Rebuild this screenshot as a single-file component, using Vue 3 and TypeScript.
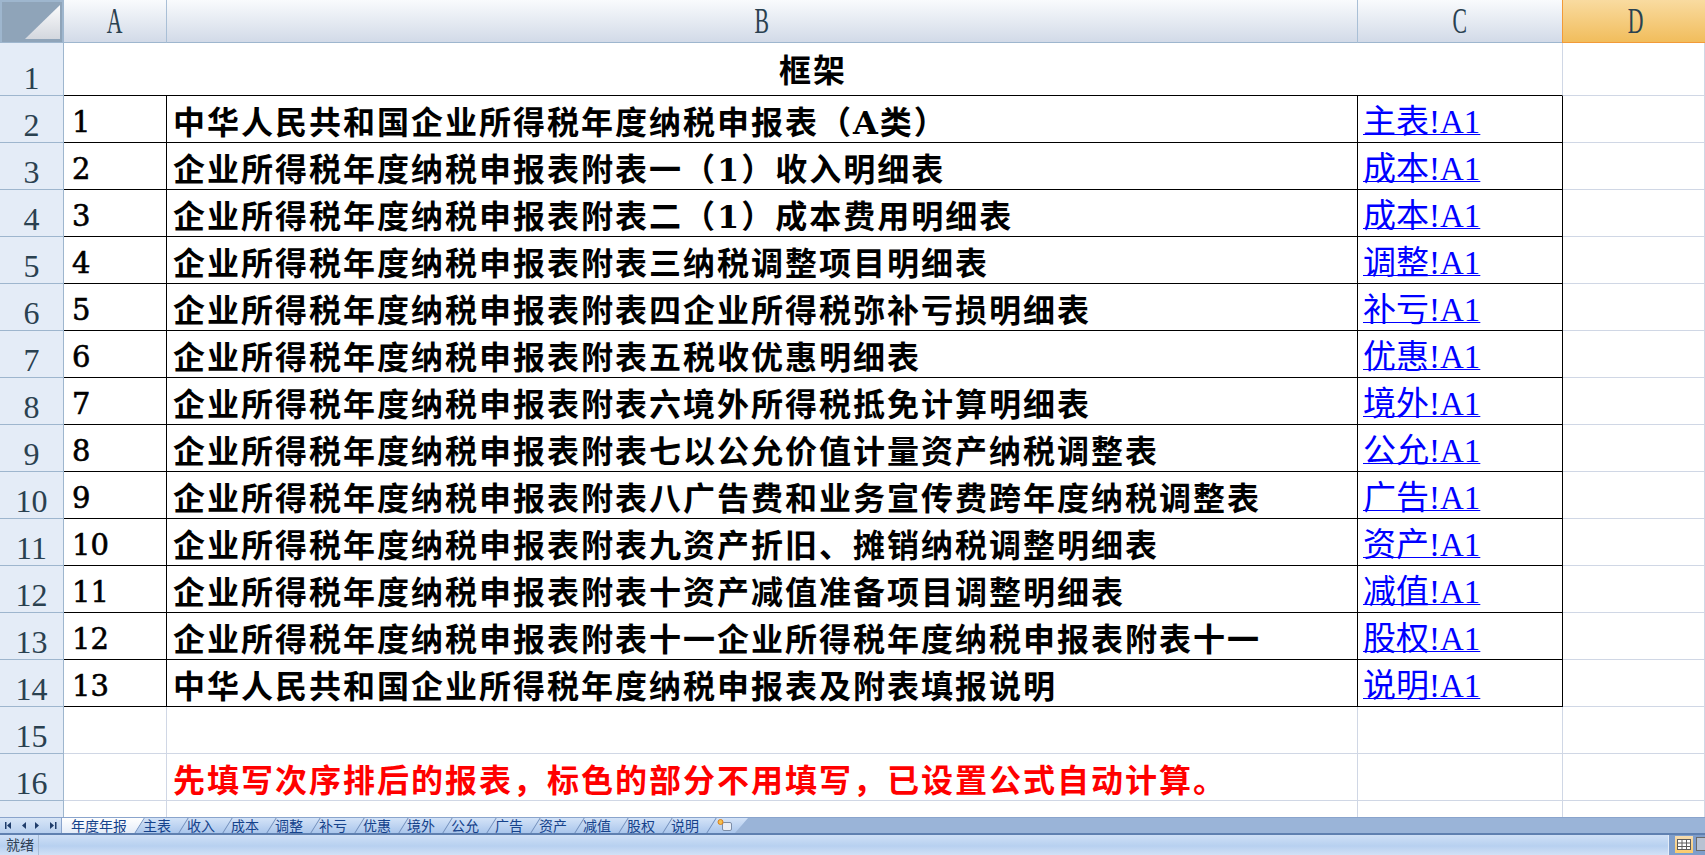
<script setup lang="ts">
interface Row { no: number; title: string; link: string }
const P = '企业所得税年度纳税申报表附表'
const rows: Row[] = [
  { no: 1, title: '中华人民共和国企业所得税年度纳税申报表（A类）', link: '主表!A1' },
  { no: 2, title: P + '一（1）收入明细表', link: '成本!A1' },
  { no: 3, title: P + '二（1）成本费用明细表', link: '成本!A1' },
  { no: 4, title: P + '三纳税调整项目明细表', link: '调整!A1' },
  { no: 5, title: P + '四企业所得税弥补亏损明细表', link: '补亏!A1' },
  { no: 6, title: P + '五税收优惠明细表', link: '优惠!A1' },
  { no: 7, title: P + '六境外所得税抵免计算明细表', link: '境外!A1' },
  { no: 8, title: P + '七以公允价值计量资产纳税调整表', link: '公允!A1' },
  { no: 9, title: P + '八广告费和业务宣传费跨年度纳税调整表', link: '广告!A1' },
  { no: 10, title: P + '九资产折旧、摊销纳税调整明细表', link: '资产!A1' },
  { no: 11, title: P + '十资产减值准备项目调整明细表', link: '减值!A1' },
  { no: 12, title: P + '十一' + P + '十一', link: '股权!A1' },
  { no: 13, title: '中华人民共和国企业所得税年度纳税申报表及附表填报说明', link: '说明!A1' },
]
const tabs: string[] = ['主表', '收入', '成本', '调整', '补亏', '优惠', '境外', '公允', '广告', '资产', '减值', '股权', '说明']
</script>

<template>
  <div class="app">
    <div class="sheet">
      <div class="corner"><i class="tri"></i></div>
      <div class="col"><span>A</span></div>
      <div class="col"><span>B</span></div>
      <div class="col"><span>C</span></div>
      <div class="col active"><span>D</span></div>

      <div class="rn">1</div>
      <div class="title">框架</div>
      <div class="cell"></div>

      <template v-for="r in rows" :key="r.no">
        <div class="rn">{{ r.no + 1 }}</div>
        <div class="cell boxed num">{{ r.no }}</div>
        <div class="cell boxed name">{{ r.title }}</div>
        <div class="cell boxed"><span class="link">{{ r.link }}</span></div>
        <div class="cell"></div>
      </template>

      <div class="rn">15</div>
      <div class="cell"></div><div class="cell"></div><div class="cell"></div><div class="cell"></div>

      <div class="rn">16</div>
      <div class="cell"></div>
      <div class="cell name red">先填写次序排后的报表，标色的部分不用填写，已设置公式自动计算。</div>
      <div class="cell"></div><div class="cell"></div>

      <div class="rn"></div>
      <div class="cell"></div><div class="cell"></div><div class="cell"></div><div class="cell"></div>
    </div>

    <div class="tabbar">
      <div class="nav">
        <svg width="62" height="16" viewBox="0 0 62 16" fill="#1f3d6b">
          <path d="M5 5h1.500v7H5zM11 5v7L7 8.500z" />
          <path d="M26 5v7l-4-3.500z" />
          <path d="M35 5v7l4-3.500z" />
          <path d="M50 5v7l4-3.500zM55 5h1.500v7H55z" />
        </svg>
      </div>
      <div class="tab first">年度年报</div>
      <div v-for="t in tabs" :key="t" class="tab">{{ t }}</div>
      <div class="tab newtab">
        <svg width="22" height="15" viewBox="0 0 22 15">
          <rect x="6.500" y="4.500" width="9" height="8" rx="1.500" fill="#e9eef6" stroke="#7d8ea8" />
          <circle cx="4.500" cy="4" r="2.500" fill="#f6c04e" stroke="#d97f1c" />
        </svg>
      </div>
      <div class="rest"></div>
    </div>

    <div class="status">
      <div class="ready">就绪</div>
      <div class="fill"></div>
      <div class="views">
        <div class="vbtn on">
          <svg width="14" height="11" viewBox="0 0 14 11">
            <rect x="0.500" y="0.500" width="13" height="10" fill="#fff" stroke="#5c5c5c" />
            <path d="M0 4h14M0 7.500h14M5 0v11M9.500 0v11" stroke="#5c5c5c" fill="none" />
          </svg>
        </div>
        <div class="vbtn off"></div>
      </div>
    </div>
  </div>
</template>

<style scoped>
.app {
  width: 1705px;
  height: 855px;
  display: flex;
  flex-direction: column;
  overflow: hidden;
  background: #fff;
  font-family: "Liberation Serif", "Noto Sans CJK SC", serif;
}
.sheet {
  height: 817px;
  flex: none;
  overflow: hidden;
  display: grid;
  grid-template-columns: 64px 103px 1191px 205px 142px;
  grid-template-rows: 43px 53px repeat(16, 47px);
}
.corner {
  background: #8fa4b9;
  border: 1px solid #9eb6ce;
  border-width: 2px 2px 1px 2px;
  position: relative;
  box-sizing: border-box;
}
.tri {
  position: absolute;
  left: 23px;
  top: 3px;
  width: 35px;
  height: 34px;
  background: linear-gradient(#fbfbfc, #d3d7de);
  clip-path: polygon(100% 0, 100% 100%, 0 100%);
}
.col {
  box-sizing: border-box;
  background: linear-gradient(#f9fbfd, #d2dae8);
  border-right: 1px solid #a9bfd6;
  border-bottom: 1px solid #9eb6ce;
  display: flex;
  align-items: center;
  justify-content: center;
  font-size: 35px;
  color: #2a4150;
}
.col span { display: block; transform: scaleX(0.62); line-height: 42px; margin-top: 2px; }
.col.active {
  background: linear-gradient(#f9dba0, #f1bd5c);
  border-bottom-color: #f29a38;
  border-left: 1px solid #f29a38;
  border-right: 0;
  margin-left: -1px;
  padding-left: 4px;
}
.rn {
  box-sizing: border-box;
  background: #e4ecf7;
  border-right: 1px solid #9eb6ce;
  border-bottom: 1px solid #9eb6ce;
  font-size: 32px;
  line-height: 32px;
  color: #2a4150;
  display: flex;
  align-items: flex-end;
  justify-content: center;
  padding-bottom: 1px;
  white-space: nowrap;
}
.cell {
  box-sizing: border-box;
  border-right: 1px solid #d0d7e5;
  border-bottom: 1px solid #d0d7e5;
  display: flex;
  align-items: flex-end;
  white-space: nowrap;
  min-width: 0;
}
.title {
  grid-column: span 3;
  box-sizing: border-box;
  border-right: 1px solid #d0d7e5;
  border-bottom: 1px solid #000;
  display: flex;
  align-items: center;
  justify-content: center;
  font-weight: 700;
  font-size: 32px;
  letter-spacing: 2px;
  color: #000;
  padding-bottom: 3px;
}
.boxed {
  border-right: 1px solid #000;
  border-bottom: 1px solid #000;
  color: #000;
}
.num {
  font-family: "DejaVu Serif", "Liberation Serif", serif;
  font-weight: 400;
  -webkit-text-stroke: 0.6px #000;
  font-size: 29px;
  line-height: 39px;
  padding-left: 8px;
}
.name {
  font-family: "DejaVu Serif", "Noto Sans CJK SC", serif;
  font-weight: 700;
  font-size: 32px;
  letter-spacing: 2px;
  line-height: 38px;
  padding-left: 6px;
}
.red { color: #f00; }
.link {
  font-size: 33px;
  line-height: 40px;
  color: #0000ff;
  text-decoration: underline;
  text-decoration-thickness: 1px;
  text-decoration-skip-ink: none;
  text-underline-offset: 1px;
  padding-left: 5px;
}
.tabbar {
  height: 16px;
  flex: none;
  display: flex;
  background: #9ab4d8;
  border-top: 1px solid #8aa4cc;
  box-sizing: border-box;
  font-family: "Noto Sans CJK SC", "Liberation Sans", sans-serif;
  font-size: 14px;
  line-height: 15px;
  color: #15428b;
}
.nav {
  width: 62px;
  flex: none;
  background: linear-gradient(#d7e5f7, #b7cfee);
  border-right: 1px solid #8aa4cc;
  box-sizing: border-box;
}
.nav svg { display: block; margin-top: -1px; }
.tab {
  width: 44px;
  flex: none;
  box-sizing: border-box;
  position: relative;
  background: linear-gradient(#d4e3f7, #aac6ec);
  white-space: nowrap;
  text-align: center;
  padding-left: 2px;
}
.tab::before {
  content: "";
  position: absolute;
  left: 5px;
  top: 0;
  bottom: 0;
  width: 1px;
  background: #6f8cba;
  transform: skewX(-32deg);
}
.tab.first {
  width: 72px;
  background: linear-gradient(#fff, #e4ecf8);
  z-index: 1;
}
.tab.first::before { display: none; }
.tab.first::after {
  content: "";
  position: absolute;
  left: 100%;
  margin-left: -5px;
  width: 10px;
  top: 0;
  bottom: 0;
  background: linear-gradient(#fff, #e4ecf8);
  transform: skewX(-32deg);
}
.tab.newtab {
  width: 42px;
  padding: 0;
  text-align: left;
  clip-path: polygon(0 0, 100% 0, 69% 100%, 0 100%);
}
.tab.newtab svg { margin-left: 10px; display: block; }
.rest { flex: 1; background: #9ab4d8; }
.status {
  height: 22px;
  flex: none;
  box-sizing: border-box;
  display: flex;
  border-top: 2px solid #5f80b0;
  background: linear-gradient(#cfe0f6, #b7d0f0 55%, #d2e1f6);
  font-family: "Noto Sans CJK SC", "Liberation Sans", sans-serif;
  font-size: 14px;
  line-height: 18px;
  color: #2d3d52;
}
.ready {
  width: 39px;
  flex: none;
  box-sizing: border-box;
  padding-left: 6px;
  border-right: 1px solid #a8bcd6;
  white-space: nowrap;
}
.fill { flex: 1; }
.views {
  width: 37px;
  flex: none;
  box-sizing: border-box;
  background: #7f9ecb;
  border-left: 1px solid #e4edf9;
  display: flex;
  gap: 3px;
  padding-left: 6px;
  padding-top: 1px;
}
.vbtn {
  width: 18px;
  height: 17px;
  flex: none;
  display: flex;
  align-items: center;
  justify-content: center;
}
.vbtn.on { background: linear-gradient(#f6dcb0, #fbcb6b); }
.vbtn.off { background: #b8c2d2; border: 1px solid #6a6a6a; box-sizing: border-box; margin-top: 1px; height: 14px; }
</style>

<style>
html, body { margin: 0; padding: 0; background: #fff; }
</style>
